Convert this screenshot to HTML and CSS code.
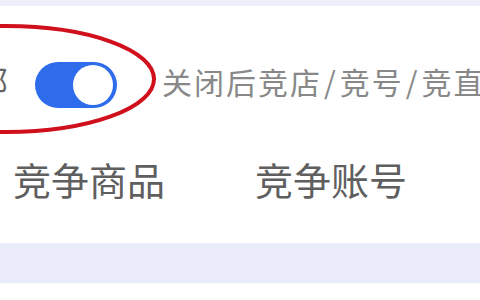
FILE: index.html
```html
<!DOCTYPE html>
<html lang="zh-CN">
<head>
    <meta charset="UTF-8">
    <meta name="viewport" content="width=device-width, initial-scale=1.0">
    <title>竞争设置</title>
    <link rel="stylesheet" href="styles.css">
</head>
<body>
    <div class="top-strip"></div>
    <div class="setting-row">
        <span class="cut-label">部</span>
        <div class="switch on">
            <div class="knob"></div>
        </div>
        <span class="hint">关闭后竞店<span class="sep">/</span>竞号<span class="sep">/</span>竞直播</span>
    </div>
    <div class="tabs">
        <div class="tab">竞争商品</div>
        <div class="tab">竞争账号</div>
    </div>
    <div class="band"></div>

    <svg class="mark" width="480" height="300" viewBox="0 0 480 300">
        <ellipse cx="6" cy="79" rx="148" ry="53" fill="none" stroke="#d0101c" stroke-width="4"/>
    </svg>
</body>
</html>
```

FILE: styles.css
```css
body {
    margin: 0;
    width: 480px;
    height: 300px;
    overflow: hidden;
    position: relative;
    background-color: #fff;
    font-family: "Noto Sans CJK SC", sans-serif;
}

.top-strip {
    height: 6px;
    background-color: #eceefa;
}

.setting-row {
    display: flex;
    align-items: center;
    height: 46px;
    margin-top: 56px;
    white-space: nowrap;
}

.cut-label {
    font-size: 32px;
    line-height: 1;
    color: #666;
    margin-left: -24px;
    margin-bottom: 10px;
}

.switch {
    width: 82px;
    height: 46px;
    margin-left: 27px;
    border-radius: 23px;
    background-color: #2e6cec;
    display: flex;
    align-items: center;
    justify-content: flex-end;
    padding-right: 4px;
    box-sizing: border-box;
    flex-shrink: 0;
}

.knob {
    width: 40px;
    height: 40px;
    border-radius: 50%;
    background-color: #fff;
}

.hint {
    margin-left: 45px;
    margin-bottom: 8px;
    font-size: 30px;
    line-height: 1;
    letter-spacing: 2px;
    color: #888;
}

.sep {
    padding: 0 2px;
}

.tabs {
    display: flex;
    gap: 90px;
    margin-top: 52px;
    padding-left: 13px;
}

.tab {
    font-size: 38px;
    line-height: 38px;
    color: #5f5f5f;
    white-space: nowrap;
}

.band {
    height: 40px;
    margin-top: 45px;
    background-color: #eaecfb;
}

.mark {
    position: absolute;
    top: 0;
    left: 0;
}
```
